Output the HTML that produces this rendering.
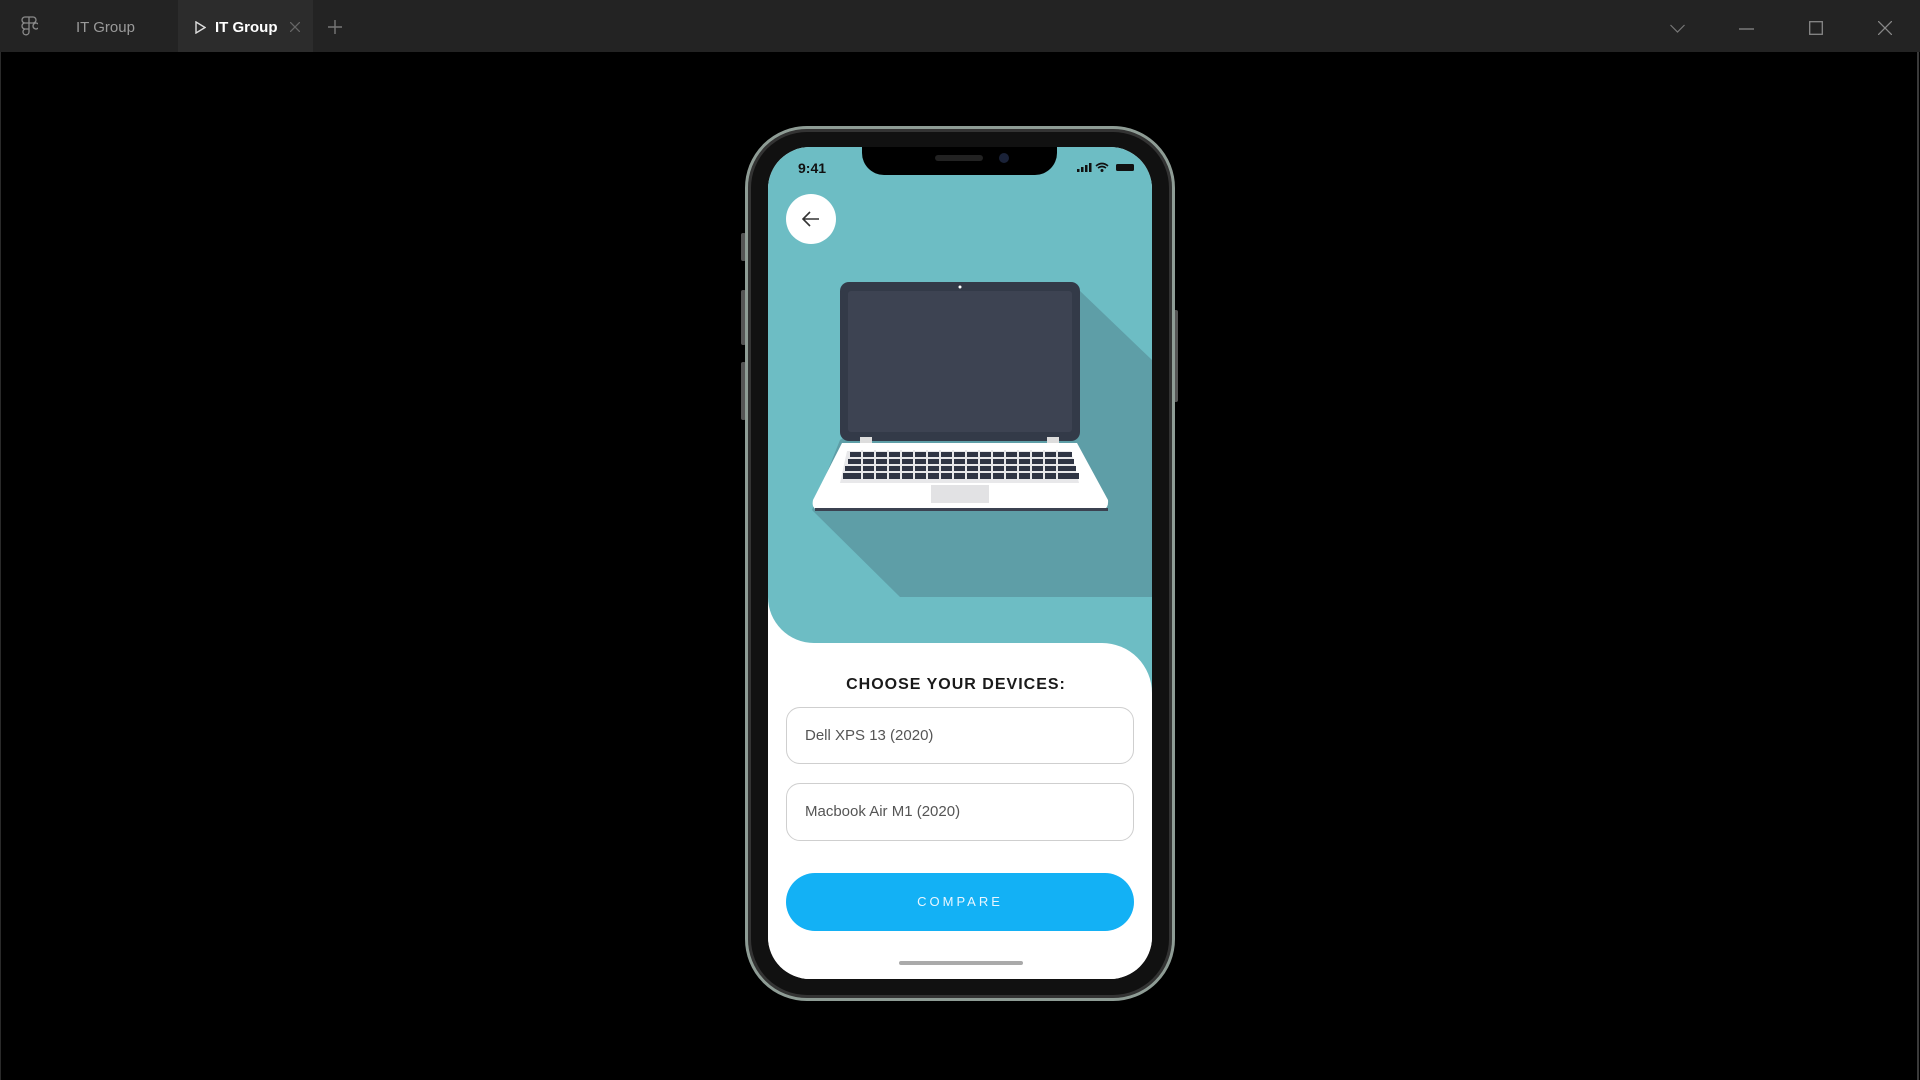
<!DOCTYPE html>
<html><head><style>
*{margin:0;padding:0;box-sizing:border-box}
body{width:1920px;height:1080px;background:#000;overflow:hidden;position:relative;font-family:"Liberation Sans",sans-serif}
.bar{position:absolute;left:0;top:0;width:1920px;height:52px;background:#232323}
.tab{position:absolute;top:1px;height:52px;line-height:54px;font-size:15px}
.abs{position:absolute}
</style></head><body>
<div class="bar">
  <svg class="abs" style="left:20px;top:16px" width="18" height="22" viewBox="0 0 18 22" fill="none" stroke="#8a8a8a" stroke-width="1.3">
    <path d="M5 1h4v6H5a3 3 0 0 1 0-6z M9 1h4a3 3 0 0 1 0 6H9z M5 7h4v6H5a3 3 0 0 1 0-6z M13 10a3 3 0 1 1 0 .01 M5 13h4v3a3 3 0 1 1-4-3z"/>
  </svg>
  <div class="tab" style="left:76px;color:#9a9a9a">IT Group</div>
  <div class="abs" style="left:178px;top:0;width:135px;height:52px;background:#2c2c2c"></div>
  <svg class="abs" style="left:195px;top:21px" width="11" height="13" viewBox="0 0 11 13"><path d="M1 1L10 6.5 1 12z" fill="none" stroke="#ddd" stroke-width="1.4"/></svg>
  <div class="tab" style="left:215px;color:#fff;font-weight:bold">IT Group</div>
  <svg class="abs" style="left:290px;top:22px" width="10" height="10"><path d="M0 0L10 10M10 0L0 10" stroke="#666" stroke-width="1.3"/></svg>
  <svg class="abs" style="left:328px;top:20px" width="14" height="14"><path d="M7 0V14M0 7H14" stroke="#777" stroke-width="1.4"/></svg>
  <svg class="abs" style="left:1670px;top:24px" width="15" height="9"><path d="M0.5 1L7.5 8 14.5 1" fill="none" stroke="#777" stroke-width="1.2"/></svg>
  <svg class="abs" style="left:1739px;top:28px" width="15" height="2"><path d="M0 1H15" stroke="#888" stroke-width="1.3"/></svg>
  <svg class="abs" style="left:1809px;top:21px" width="14" height="14"><rect x="0.7" y="0.7" width="12.6" height="12.6" fill="none" stroke="#888" stroke-width="1.3"/></svg>
  <svg class="abs" style="left:1878px;top:21px" width="14" height="14"><path d="M0 0L14 14M14 0L0 14" stroke="#888" stroke-width="1.3"/></svg>
</div>
<div class="abs" style="left:1917px;top:52px;width:2px;height:1028px;background:#3a3a3a"></div>
<div class="abs" style="left:0;top:52px;width:1px;height:1028px;background:#2a2a2a"></div>

<div class="abs" style="left:741px;top:233px;width:5px;height:28px;background:#555;border-radius:2px"></div>
<div class="abs" style="left:741px;top:290px;width:5px;height:55px;background:#555;border-radius:2px"></div>
<div class="abs" style="left:741px;top:362px;width:5px;height:58px;background:#555;border-radius:2px"></div>
<div class="abs" style="left:1173px;top:310px;width:5px;height:92px;background:#555;border-radius:2px"></div>
<div class="abs" style="left:745px;top:126px;width:430px;height:875px;border-radius:62px;background:#111;border:3px solid #8e9c95;box-shadow:inset 0 0 0 3px #333"></div>
<div class="abs" style="left:768px;top:147px;width:384px;height:832px;border-radius:42px;overflow:hidden;background:#fff">
  <div class="abs" style="left:0;top:496px;width:384px;height:60px;background:#6dbdc4"></div>
  <div class="abs" style="left:0;top:496px;width:384px;height:400px;background:#fff;border-top-right-radius:50px"></div>
  <div class="abs" style="left:0;top:0;width:384px;height:496px;overflow:hidden;border-bottom-left-radius:46px">
  <svg class="abs" style="left:0;top:0" width="384" height="496" viewBox="768 147 384 496">
    <rect x="768" y="147" width="384" height="496" fill="#6dbdc4"/>
    <polygon points="1079,290 1152,360 1152,597 900,597 812,510 840,440" fill="#5e9ea7"/>
    <rect x="840" y="282" width="240" height="159" rx="9" fill="#333a48"/>
    <rect x="848" y="291" width="224" height="141" rx="3" fill="#3d4352"/>
    <circle cx="960" cy="287" r="1.5" fill="#fff"/>
    <rect x="860" y="437" width="12" height="8" fill="#ddd"/>
    <rect x="1047" y="437" width="12" height="8" fill="#ddd"/>
    <path d="M842 443H1077L1108 500Q1109 510 1100 510H820Q811 510 813 500Z" fill="#fff"/>
    <rect x="815" y="508" width="293" height="3" fill="#3b4150"/>
    <path d="M847 451H1071L1079 483H840Z" fill="#e8e8ea"/>
    <g fill="#2f3544">
      <rect x="850" y="452" width="222" height="5"/>
      <rect x="848" y="459" width="226" height="5"/>
      <rect x="845" y="466" width="231" height="5"/>
      <rect x="843" y="473" width="236" height="6"/>
    </g>
    <g stroke="#e8e8ea" stroke-width="2">
      <path d="M862 450V480M875 450V480M888 450V480M901 450V480M914 450V480M927 450V480M940 450V480M953 450V480M966 450V480M979 450V480M992 450V480M1005 450V480M1018 450V480M1031 450V480M1044 450V480M1057 450V480"/>
    </g>
    <rect x="931" y="485" width="58" height="18" fill="#e2e2e4"/>
  </svg>
  </div>
  <div class="abs" style="left:94px;top:-2px;width:195px;height:30px;background:#000;border-radius:0 0 22px 22px"></div>
  <div class="abs" style="left:167px;top:8px;width:48px;height:6px;background:#222;border-radius:3px"></div>
  <div class="abs" style="left:231px;top:6px;width:10px;height:10px;background:#1a2238;border-radius:50%"></div>
  <div class="abs" style="left:30px;top:13px;font-size:14px;font-weight:bold;color:#111">9:41</div>
  <svg class="abs" style="left:309px;top:15px" width="62" height="11">
    <rect x="0" y="7" width="2.5" height="3" fill="#111"/><rect x="4" y="5" width="2.5" height="5" fill="#111"/><rect x="8" y="3" width="2.5" height="7" fill="#111"/><rect x="12" y="1" width="2.5" height="9" fill="#111"/>
    <path d="M19 4Q25 -1 31 4M21 6Q25 3 29 6" fill="none" stroke="#111" stroke-width="1.6"/><circle cx="25" cy="8.5" r="1.5" fill="#111"/>
    <rect x="39" y="2" width="18" height="7" rx="1.5" fill="#111"/>
  </svg>
  <div class="abs" style="left:18px;top:47px;width:50px;height:50px;border-radius:50%;background:#fff"></div>
  <svg class="abs" style="left:34px;top:64px" width="18" height="16"><path d="M17 8H2M8 1L1 8 8 15" fill="none" stroke="#333" stroke-width="1.6"/></svg>
  <div class="abs" style="left:0;top:529px;width:376px;text-align:center;font-size:16px;font-weight:bold;letter-spacing:1px;color:#1a1a1a">CHOOSE YOUR DEVICES:</div>
  <div class="abs" style="left:18px;top:560px;width:348px;height:57px;border:1px solid #cfcfcf;border-radius:14px;padding-left:18px;line-height:55px;font-size:15px;color:#555">Dell XPS 13 (2020)</div>
  <div class="abs" style="left:18px;top:636px;width:348px;height:58px;border:1px solid #cfcfcf;border-radius:14px;padding-left:18px;line-height:56px;font-size:15px;color:#555">Macbook Air M1 (2020)</div>
  <div class="abs" style="left:18px;top:726px;width:348px;height:58px;border-radius:29px;background:#13b1f5;text-align:center;line-height:58px;font-size:13px;letter-spacing:3px;color:#e8f6ff">COMPARE</div>
  <div class="abs" style="left:131px;top:814px;width:124px;height:4px;border-radius:2px;background:#aaa"></div>
</div>
</body></html>
